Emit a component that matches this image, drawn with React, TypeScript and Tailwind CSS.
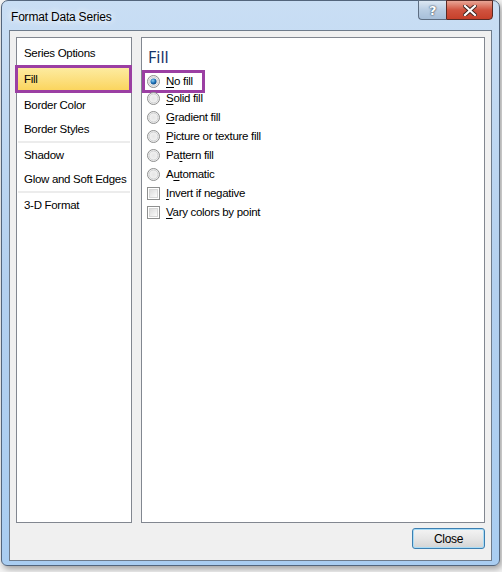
import React from 'react';

const font = "font-['Liberation_Sans',_'Arial',_sans-serif]";

function Radio({ checked }: { checked?: boolean }) {
  return (
    <svg width="13" height="13" viewBox="0 0 13 13" className="shrink-0">
      <defs>
        <radialGradient id="rbg" cx="50%" cy="50%" r="60%">
          <stop offset="0%" stopColor="#e6e6e6" />
          <stop offset="100%" stopColor="#f8f8f8" />
        </radialGradient>
        <radialGradient id="rdot" cx="40%" cy="35%" r="70%">
          <stop offset="0%" stopColor="#8fd0f5" />
          <stop offset="60%" stopColor="#1a6fb5" />
          <stop offset="100%" stopColor="#0c3f78" />
        </radialGradient>
      </defs>
      <circle cx="6.5" cy="6.5" r="6" fill="url(#rbg)" stroke="#8e8f8f" strokeWidth="1" />
      <circle cx="6.5" cy="6.5" r="4.5" fill="none" stroke="#cfd0d1" strokeWidth="1" />
      {checked && <circle cx="6.5" cy="6.5" r="3" fill="url(#rdot)" />}
    </svg>
  );
}

function Check() {
  return (
    <div className="w-[13px] h-[13px] shrink-0 border border-[#8e8f8f] bg-white p-[1px]">
      <div className="w-full h-full border border-[#d6d6d6] bg-gradient-to-br from-[#dcdcdc] to-[#fbfbfb]" />
    </div>
  );
}

function Label({ pre, key1, post }: { pre: string; key1: string; post: string }) {
  return (
    <span className="whitespace-nowrap">
      {pre}
      <span className="underline underline-offset-2">{key1}</span>
      {post}
    </span>
  );
}

function Item({ children }: { children: React.ReactNode }) {
  return <div className="h-[24px] pt-[2px] flex items-center pl-[7px] whitespace-nowrap">{children}</div>;
}

export default function App() {
  const options = [
    { pre: '', k: 'N', post: 'o fill', type: 'radio', checked: true },
    { pre: '', k: 'S', post: 'olid fill', type: 'radio' },
    { pre: '', k: 'G', post: 'radient fill', type: 'radio' },
    { pre: '', k: 'P', post: 'icture or texture fill', type: 'radio' },
    { pre: 'Pa', k: 't', post: 'tern fill', type: 'radio' },
    { pre: 'A', k: 'u', post: 'tomatic', type: 'radio' },
    { pre: '', k: 'I', post: 'nvert if negative', type: 'check' },
    { pre: '', k: 'V', post: 'ary colors by point', type: 'check' },
  ];

  return (
    <div className={`w-[502px] h-[572px] bg-[#f4f4f4] overflow-hidden text-[11.5px] tracking-[-0.3px] text-black ${font}`}>
      {/* window frame */}
      <div className="relative ml-[1px] w-[499px] h-[566px] rounded-t-[7px] rounded-b-[6px] border border-[#53657c] bg-gradient-to-b from-[#c9def4] via-[#b3d0ef] to-[#a9cdf1] shadow-[2px_3px_6px_rgba(0,0,0,0.35)] flex flex-col px-[7px] pb-[4px]">
        {/* title bar */}
        <div className="h-[29px] flex items-start">
          <div className="pl-[2px] pt-[8px] text-[12px] tracking-[-0.2px] leading-[16px] whitespace-nowrap [text-shadow:0_0_6px_#fff,0_0_8px_#fff]">
            Format Data Series
          </div>
          <div className="ml-auto flex -mr-[1px] -mt-[1px]">
            <div className="w-[28px] h-[20px] rounded-bl-[4px] border border-[#5e6e82] border-r-0 bg-gradient-to-b from-[#dce7f3] via-[#b9cde3] to-[#a7bfd9] flex items-center justify-center">
              <span className="font-['DejaVu_Sans',_sans-serif] font-bold text-[13px] leading-none text-white [text-shadow:0_0_1px_#344458,0_0_2px_#344458]">?</span>
            </div>
            <div className="w-[47px] h-[20px] rounded-br-[4px] border border-[#5a2a24] bg-gradient-to-b from-[#e8a596] via-[#d0533f] to-[#c6402a] flex items-center justify-center">
              <svg width="14" height="11" viewBox="0 0 14 11">
                <path d="M2 1 L12 10 M12 1 L2 10" stroke="#3c2420" strokeWidth="4" strokeLinecap="square" />
                <path d="M2 1 L12 10 M12 1 L2 10" stroke="#ffffff" strokeWidth="2.2" strokeLinecap="square" />
              </svg>
            </div>
          </div>
        </div>

        {/* client area */}
        <div className="flex-1 border border-[#6e7b8b] bg-[#f0f0f0] flex flex-col px-[6px] pt-[6px]">
          <div className="h-[486px] flex gap-[9px]">
            {/* left list */}
            <div className="w-[116px] border border-[#828790] bg-white pt-[3px]">
              <Item>Series Options</Item>
              <div className="h-[28px] -ml-[2px] -mr-[1px] border-[3px] border-[#9b3fa3] bg-gradient-to-b from-[#fdeb9f] to-[#fbd55d] flex items-center pl-[6px] pt-[1px]">
                Fill
              </div>
              <Item>Border Color</Item>
              <Item>Border Styles</Item>
              <div className="h-[2px] mx-[1px] bg-[#ececec]" />
              <Item>Shadow</Item>
              <Item>Glow and Soft Edges</Item>
              <div className="h-[2px] mx-[1px] bg-[#ececec]" />
              <Item>3-D Format</Item>
            </div>

            {/* right pane */}
            <div className="flex-1 border border-[#828790] bg-white pl-[5px] pt-[8px]">
              <div className="font-['Noto_Sans',_sans-serif] tracking-normal text-[16px] leading-[22px] text-[#173569] pl-[1px] mb-[2px]">Fill</div>
              <div className="flex flex-col">
                {options.map((o, i) => (
                  <div
                    key={i}
                    className={
                      i === 0
                        ? 'h-[23px] w-[63px] -ml-[5px] mb-[-4px] border-[3px] border-[#9b3fa3] flex items-center gap-[6px] pl-[2px]'
                        : 'h-[19px] flex items-center gap-[6px]'
                    }
                  >
                    {o.type === 'radio' ? <Radio checked={o.checked} /> : <Check />}
                    <Label pre={o.pre} key1={o.k} post={o.post} />
                  </div>
                ))}
              </div>
            </div>
          </div>

          {/* buttons */}
          <div className="flex justify-end pt-[5px]">
            <button className="w-[73px] h-[21px] rounded-[3px] border border-[#3c7fb1] bg-gradient-to-b from-[#f4f4f4] via-[#e6e6e6] to-[#d4d4d4] shadow-[inset_0_0_0_1px_#a9dcf6] text-[12px] leading-none">
              Close
            </button>
          </div>
        </div>
      </div>
    </div>
  );
}
